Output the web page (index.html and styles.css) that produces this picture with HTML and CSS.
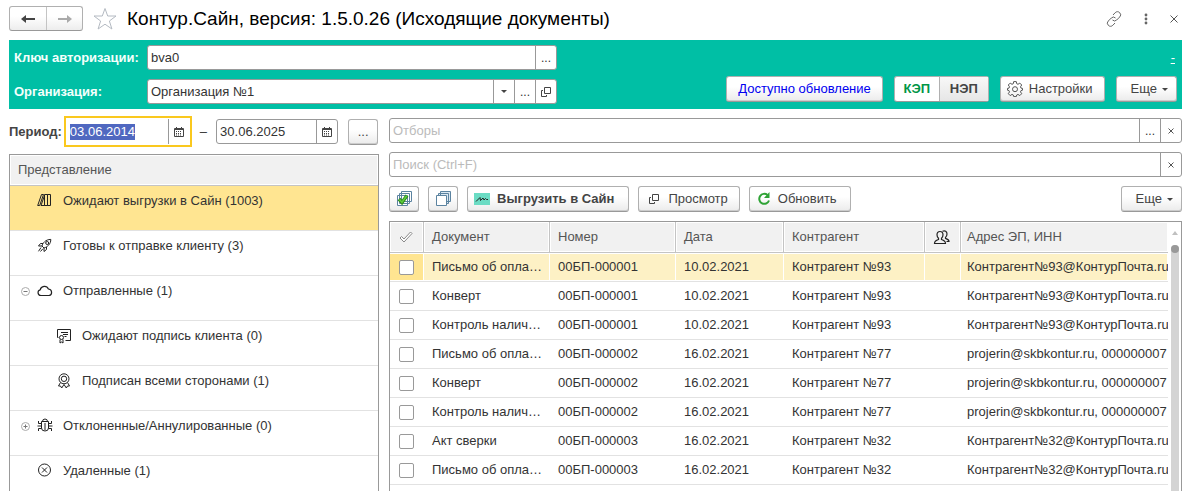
FILE: index.html
```html
<!DOCTYPE html>
<html lang="ru">
<head>
  <meta charset="UTF-8" />
  <meta name="viewport" content="width=device-width, initial-scale=1.0" />
  <title>Контур.Сайн</title>
  <link rel="stylesheet" href="styles.css">
</head>
<body>
  <svg class="sprite" aria-hidden="true">
    <symbol id="calendar" viewBox="0 0 10 10">
      <path d="M.5 1.5h9v8h-9zM0 2.500h10M2.500 0v2M7.500 0v2" fill="none" stroke="#444" />
      <path d="M2 4.500h6M2 6.500h6M2 8h6" stroke="#444" stroke-dasharray="1 1" />
    </symbol>
    <symbol id="open" viewBox="0 0 10 10">
      <path d="M3.500.500h6v6h-6zM2 3.500H.500v6h5V8" fill="none" stroke="#444" />
    </symbol>
  </svg>

  <header class="titlebar">
    <div class="nav">
      <button type="button" aria-label="Назад">
        <svg width="14" height="10" viewBox="0 0 14 10"><path d="M0 5l5-4v3h9v2H5v3z" fill="#444" /></svg>
      </button>
      <button type="button" aria-label="Вперед">
        <svg width="14" height="10" viewBox="0 0 14 10"><path d="M14 5L9 1v3H0v2h9v3z" fill="#aaa" /></svg>
      </button>
    </div>
    <button type="button" class="plain" aria-label="В избранное">
      <svg width="24" height="24" viewBox="0 0 24 24"><path d="M12 1.500l2.700 7.500h8.300l-6.600 5 2.500 8L12 17.200 5.100 22l2.500-8L1 9h8.300z" fill="none" stroke="#b4bac2" /></svg>
    </button>
    <h1>Контур.Сайн, версия: 1.5.0.26 (Исходящие документы)</h1>
    <div class="window-tools">
      <button type="button" class="plain" aria-label="Получить ссылку">
        <svg width="16" height="16" viewBox="0 0 16 16" fill="none" stroke="#666"><path d="M7 4l2.200-2.300a3 3 0 0 1 4.500 0 3 3 0 0 1 0 4.300l-3 3a3 3 0 0 1-4.200 0M9 12l-2.200 2.300a3 3 0 0 1-4.500 0 3 3 0 0 1 0-4.300l3-3a3 3 0 0 1 4.200 0" /></svg>
      </button>
      <button type="button" class="plain" aria-label="Меню">
        <svg width="4" height="12" viewBox="0 0 4 12" fill="#666"><circle cx="2" cy="2" r="1.400" /><circle cx="2" cy="6" r="1.400" /><circle cx="2" cy="10" r="1.400" /></svg>
      </button>
      <button type="button" class="plain" aria-label="Закрыть">
        <svg width="8" height="8" viewBox="0 0 8 8"><path d="M.5.500l7 7M7.500.500l-7 7" stroke="#555" /></svg>
      </button>
    </div>
  </header>

  <section class="auth">
    <div class="auth-fields">
      <label for="authKey">Ключ авторизации:</label>
      <div class="field">
        <input type="text" id="authKey" value="bva0" />
        <button type="button">...</button>
      </div>
      <label for="organization">Организация:</label>
      <div class="field">
        <input type="text" id="organization" value="Организация №1" />
        <button type="button" aria-label="Список"><span class="caret"></span></button>
        <button type="button">...</button>
        <button type="button" aria-label="Открыть"><svg width="10" height="10"><use href="#open" /></svg></button>
      </div>
    </div>
    <div class="auth-actions">
      <a href="#" class="collapse">-</a>
      <div class="buttons">
        <button type="button" class="btn update">Доступно обновление</button>
        <div class="switch">
          <button type="button" class="on">КЭП</button>
          <button type="button">НЭП</button>
        </div>
        <button type="button" class="btn settings">
          <svg width="16" height="16" viewBox="0 0 16 16" fill="none" stroke="#555"><path d="M6.700.600h2.600l.4 2.100 1.300.600 1.800-1.200 1.900 1.900-1.200 1.800.5 1.300 1.500.300v1.800l-1.500.400-.5 1.300 1.200 1.800-1.900 1.900-1.800-1.200-1.300.600-.4 1.600H6.700l-.4-1.600-1.300-.600-1.800 1.200-1.900-1.900 1.200-1.800-.5-1.300-1.500-.4V7.400L2 7.100l.5-1.300L1.300 4l1.900-1.900L5 3.300l1.300-.6z" /><circle cx="8" cy="8.200" r="2.500" /></svg>
          Настройки
        </button>
        <button type="button" class="btn more">Еще <span class="caret"></span></button>
      </div>
    </div>
  </section>

  <main class="content">
    <aside class="side">
      <div class="period">
        <label for="dateFrom">Период:</label>
        <div class="field date active">
          <input type="text" id="dateFrom" value="03.06.2014" />
          <button type="button" aria-label="Календарь"><svg width="10" height="10"><use href="#calendar" /></svg></button>
        </div>
        <span class="dash">–</span>
        <div class="field date">
          <input type="text" id="dateTo" aria-label="Конец периода" value="30.06.2025" />
          <button type="button" aria-label="Календарь"><svg width="10" height="10"><use href="#calendar" /></svg></button>
        </div>
        <button type="button" class="btn icon-btn period-more">...</button>
      </div>

      <div class="tree">
        <div class="tree-head">Представление</div>
        <ul>
          <li class="selected">
            <span class="toggle"></span>
            <svg width="16" height="16" viewBox="0 0 16 16" fill="none" stroke="#222"><path d="M.7 12.500L4.500 1.500h2L2.700 12.500zM4 12.500L7.500 2.500v10zM7.500 1.500h3v11h-3zM10.500 1.500h3v11h-3z" /></svg>
            Ожидают выгрузки в Сайн (1003)
          </li>
          <li>
            <span class="toggle"></span>
            <svg width="16" height="16" viewBox="0 0 16 16" fill="none" stroke="#222"><path d="M5 8c.7-3 3.500-6.500 8.800-6.600C13.900 6 10.500 8.800 7 10zM6 5.500H3.500L1.500 8 5 8M9.500 9v2.500L7 13.500V10M4 9.500l-2.500 3.800M5.800 10.800L3.500 13.500" /><circle cx="10.200" cy="5" r="1.500" /></svg>
            Готовы к отправке клиенту (3)
          </li>
          <li>
            <button type="button" class="toggle" aria-label="Свернуть"><svg width="9" height="9" viewBox="0 0 9 9" fill="none" stroke="#aaa"><circle cx="4.500" cy="4.500" r="4" /><path d="M2.500 4.500h4" stroke="#777" /></svg></button>
            <svg width="16" height="16" viewBox="0 0 16 16" fill="none" stroke="#222" stroke-width="1.200"><path d="M3.800 12.500a2.900 2.900 0 0 1-.6-5.700 4.300 4.300 0 0 1 8.200-.8 3.300 3.300 0 0 1 .7 6.500z" /></svg>
            Отправленные (1)
          </li>
          <li class="child">
            <svg width="16" height="16" viewBox="0 0 16 16" fill="none" stroke="#222"><path d="M2.500 9.500h-1v-8h13v11H9.500M5 4.500h7M7 6.500h5M8.500 8.500h2M4 11.500V15l1.500-1L7 15v-3.500" /><circle cx="5.500" cy="9.500" r="2" /></svg>
            Ожидают подпись клиента (0)
          </li>
          <li class="child">
            <svg width="16" height="16" viewBox="0 0 16 16" fill="none" stroke="#222"><circle cx="8" cy="5.800" r="5" /><circle cx="8" cy="5.800" r="2.700" /><path d="M4.500 9.500L2.500 13h2l1.200 2L8 11.500l2.300 3.500 1.200-2h2l-2-3.500" /></svg>
            Подписан всеми сторонами (1)
          </li>
          <li>
            <button type="button" class="toggle" aria-label="Развернуть"><svg width="9" height="9" viewBox="0 0 9 9" fill="none" stroke="#aaa"><circle cx="4.500" cy="4.500" r="4" /><path d="M2.500 4.500h4M4.500 2.500v4" stroke="#777" /></svg></button>
            <svg width="16" height="16" viewBox="0 0 16 16" fill="none" stroke="#222"><path d="M5.500 3.500a2.500 2.500 0 0 1 5 0M4.500 3.500h7V10a3.500 3 0 0 1-7 0zM8 5v7M4.500 5.500h-3V3M4.500 8H.5M4.500 10.500h-3V13M11.500 5.500h3V3M11.500 8h4M11.500 10.500h3V13" /></svg>
            Отклоненные/Аннулированные (0)
          </li>
          <li>
            <span class="toggle"></span>
            <svg width="16" height="16" viewBox="0 0 16 16" fill="none" stroke="#222"><circle cx="7.500" cy="7" r="6" /><path d="M5 4.500l5 5M10 4.500l-5 5" /></svg>
            Удаленные (1)
          </li>
        </ul>
      </div>
    </aside>

    <section class="docs">
      <div class="field">
        <input type="text" aria-label="Отборы" placeholder="Отборы" />
        <button type="button">...</button>
        <button type="button" aria-label="Очистить"><svg width="6" height="6" viewBox="0 0 6 6"><path d="M.5.500l5 5M5.500.500l-5 5" stroke="#555" /></svg></button>
      </div>
      <div class="field">
        <input type="text" aria-label="Поиск" placeholder="Поиск (Ctrl+F)" />
        <button type="button" aria-label="Очистить"><svg width="6" height="6" viewBox="0 0 6 6"><path d="M.5.500l5 5M5.500.500l-5 5" stroke="#555" /></svg></button>
      </div>
      <div class="toolbar">
        <button type="button" class="btn icon-btn" aria-label="Отметить все">
          <svg width="16" height="16" viewBox="0 0 16 16" fill="#fff" stroke="#5b83a0"><path d="M5.500.500h10v10h-10zM3.500 2.500h10v10h-10zM1.500 4.500h10v10h-10z" /><path d="M3 8l3 3.500 5-7" fill="none" stroke="#2e8b1e" stroke-width="3.500" /><path d="M3.500 8.500l2.500 2.800 4.700-6.500" fill="none" stroke="#5fce3d" stroke-width="1.500" /></svg>
        </button>
        <button type="button" class="btn icon-btn" aria-label="Снять отметки">
          <svg width="16" height="16" viewBox="0 0 16 16" fill="#dbe8f2" stroke="#5b83a0"><path d="M5.500.500h10v10h-10zM3.500 2.500h10v10h-10z" /><path d="M1.500 4.500h10v10h-10z" fill="#fff" /></svg>
        </button>
        <button type="button" class="btn upload">
          <svg width="16" height="12" viewBox="0 0 16 12"><path d="M0 0h16v12H0z" fill="#6bdcc4" /><path d="M2 8.500l4-4 .5 3L9 5l1 2 1.500-1.500 1 1H14" fill="none" stroke="#222" /></svg>
          Выгрузить в Сайн
        </button>
        <button type="button" class="btn preview">
          <svg width="10" height="10"><use href="#open" /></svg>
          Просмотр
        </button>
        <button type="button" class="btn refresh">
          <svg width="14" height="14" viewBox="0 0 14 14"><path d="M10.500 3A5 5 0 1 0 12 8.500" fill="none" stroke="#2fa336" stroke-width="2" /><path d="M12.500 0v6H7z" fill="#2fa336" /></svg>
          Обновить
        </button>
        <button type="button" class="btn more">Еще <span class="caret"></span></button>
      </div>

      <div class="grid">
        <div class="grid-body">
          <table>
            <colgroup>
              <col class="c-check"><col class="c-doc"><col class="c-num"><col class="c-date"><col class="c-agent"><col class="c-group"><col>
            </colgroup>
            <thead>
              <tr>
                <th class="mark"><svg width="14" height="12" viewBox="0 0 14 12"><path d="M1 7l1.500-1.500L5 8 11.500 1 13 2.500 5 11z" fill="#fff" stroke="#888" /></svg></th>
                <th>Документ</th>
                <th>Номер</th>
                <th>Дата</th>
                <th>Контрагент</th>
                <th class="mark"><svg width="17" height="15" viewBox="0 0 17 15" fill="none" stroke="#222" stroke-width="1.200"><path d="M7 1.500c2 0 3 1.300 3 3.200 0 1.600-.6 2.800-1.500 3.600v1.200c2.500.8 4 1.500 4 4h-11c0-2.500 1.500-3.200 4-4V8.300C4.600 7.500 4 6.300 4 4.700c0-1.900 1-3.200 3-3.200zM9.500 1.200c2.500-1 4.500.300 4.500 2.800 0 1.500-.6 2.600-1.500 3.400v1c2 .7 3.500 1.300 3.500 3.100h-2.500" /></svg></th>
                <th class="address">Адрес ЭП, ИНН</th>
              </tr>
            </thead>
            <tbody>
              <tr class="current">
                <td class="mark"><input type="checkbox" aria-label="Выбрать" /></td>
                <td>Письмо об опла…</td><td>00БП-000001</td><td>10.02.2021</td><td>Контрагент №93</td><td></td><td class="address">Контрагент№93@КонтурПочта.ru</td>
              </tr>
              <tr>
                <td class="mark"><input type="checkbox" aria-label="Выбрать" /></td>
                <td>Конверт</td><td>00БП-000001</td><td>10.02.2021</td><td>Контрагент №93</td><td></td><td class="address">Контрагент№93@КонтурПочта.ru</td>
              </tr>
              <tr>
                <td class="mark"><input type="checkbox" aria-label="Выбрать" /></td>
                <td>Контроль налич…</td><td>00БП-000001</td><td>10.02.2021</td><td>Контрагент №93</td><td></td><td class="address">Контрагент№93@КонтурПочта.ru</td>
              </tr>
              <tr>
                <td class="mark"><input type="checkbox" aria-label="Выбрать" /></td>
                <td>Письмо об опла…</td><td>00БП-000002</td><td>16.02.2021</td><td>Контрагент №77</td><td></td><td class="address">projerin@skbkontur.ru, 000000007</td>
              </tr>
              <tr>
                <td class="mark"><input type="checkbox" aria-label="Выбрать" /></td>
                <td>Конверт</td><td>00БП-000002</td><td>16.02.2021</td><td>Контрагент №77</td><td></td><td class="address">projerin@skbkontur.ru, 000000007</td>
              </tr>
              <tr>
                <td class="mark"><input type="checkbox" aria-label="Выбрать" /></td>
                <td>Контроль налич…</td><td>00БП-000002</td><td>16.02.2021</td><td>Контрагент №77</td><td></td><td class="address">projerin@skbkontur.ru, 000000007</td>
              </tr>
              <tr>
                <td class="mark"><input type="checkbox" aria-label="Выбрать" /></td>
                <td>Акт сверки</td><td>00БП-000003</td><td>16.02.2021</td><td>Контрагент №32</td><td></td><td class="address">Контрагент№32@КонтурПочта.ru</td>
              </tr>
              <tr>
                <td class="mark"><input type="checkbox" aria-label="Выбрать" /></td>
                <td>Письмо об опла…</td><td>00БП-000003</td><td>16.02.2021</td><td>Контрагент №32</td><td></td><td class="address">Контрагент№32@КонтурПочта.ru</td>
              </tr>
            </tbody>
          </table>
        </div>
        <div class="scroll">
          <span class="scroll-up"></span>
          <div class="scroll-track"><span class="scroll-thumb"></span></div>
        </div>
      </div>
    </section>
  </main>

  <script>
    // курсор сразу в начале периода
    document.getElementById('dateFrom').focus();
    document.getElementById('dateFrom').select();
  </script>
</body>
</html>
```

FILE: styles.css
```css
* {
  box-sizing: border-box;
  margin: 0;
  padding: 0;
}

body {
  display: flex;
  flex-direction: column;
  height: 100vh;
  padding: 0 2px 0 9px;
  overflow: hidden;
  background: #fff;
  color: #333;
  font: 13px/16px "Liberation Sans", Arial, sans-serif;
}

button,
input {
  font: inherit;
  color: inherit;
}

button {
  display: flex;
  align-items: center;
  justify-content: center;
  border: none;
  background: none;
  white-space: nowrap;
}

svg {
  flex: none;
}

.sprite {
  position: absolute;
  width: 0;
  height: 0;
}

/* заголовок окна */
.titlebar {
  display: flex;
  align-items: center;
  flex: none;
  gap: 10px;
  height: 40px;
  padding-bottom: 3px;
}

.nav {
  display: flex;
  height: 25px;
  border: 1px solid #b0b0b0;
  border-bottom-color: #999;
  border-radius: 3px;
  background: linear-gradient(#fff 40%, #ededed);
}

.nav button {
  width: 36px;
}

.nav button + button {
  border-left: 1px solid #c4c4c4;
}

h1 {
  font-size: 19px;
  font-weight: normal;
  line-height: 24px;
  color: #000;
  white-space: nowrap;
}

.window-tools {
  display: flex;
  align-items: center;
  gap: 22px;
  margin-left: auto;
  padding-right: 4px;
}

/* поля ввода */
.field {
  display: flex;
  flex: none;
  height: 25px;
  border: 1px solid #999;
  border-radius: 3px;
  background: #fff;
}

.field input {
  flex: 1;
  min-width: 0;
  padding: 0 3px;
  border: none;
  outline: none;
  background: none;
}

.field input::placeholder {
  color: #bbb;
}

.field input::selection {
  background: #5068c0;
  color: #fff;
}

.field button {
  width: 21px;
  border-left: 1px solid #999;
  font-size: 12px;
}

.caret {
  border: 3px solid transparent;
  border-top-color: #444;
  border-bottom: none;
}

/* кнопки */
.btn {
  gap: 9px;
  height: 26px;
  padding: 0 13px 0 10px;
  border: 1px solid #b0b0b0;
  border-bottom-color: #999;
  border-radius: 3px;
  background: linear-gradient(#fff 40%, #ebebeb);
  box-shadow: inset 0 -1px 0 #ccc;
  color: #444;
}

.icon-btn {
  width: 30px;
  padding: 0;
}

.more {
  gap: 5px;
  padding: 0 8px 0 14px;
}

/* зелёная панель */
.auth {
  display: flex;
  flex: none;
  justify-content: space-between;
  padding: 5px;
  background: #00bfa5;
}

.auth-fields {
  display: grid;
  grid-template-columns: 133px minmax(200px, 410px);
  row-gap: 9px;
  flex: 0 1 543px;
  align-items: center;
}

.auth label {
  font-weight: bold;
  color: #f4fffc;
}

.auth-actions {
  display: flex;
  flex-direction: column;
  align-items: flex-end;
  justify-content: space-between;
  padding: 5px 0 2px;
}

.collapse {
  padding-right: 2px;
  color: #fff;
}

.buttons {
  display: flex;
  gap: 11px;
}

.update {
  padding: 0 11px;
  color: #0000f0;
}

.settings {
  padding: 0 11px 0 6px;
  gap: 6px;
}

.switch {
  display: flex;
  border: 1px solid #b0b0b0;
  border-bottom-color: #999;
  border-radius: 3px;
  background: #fff;
}

.switch button {
  width: 49px;
  background: linear-gradient(#f8f8f8, #e6e6e6);
  border-left: 1px solid #b0b0b0;
  font-weight: bold;
  color: #444;
}

.switch .on {
  width: 44px;
  border-left: none;
  background: none;
  color: #009646;
}

/* левая часть */
.content {
  display: grid;
  grid-template-columns: 370px 1fr;
  gap: 10px;
  flex: 1;
  min-height: 0;
}

.side,
.docs {
  display: flex;
  flex-direction: column;
  min-width: 0;
  min-height: 0;
}

.period {
  display: flex;
  align-items: center;
  height: 45px;
}

.period label {
  margin-right: 2px;
  font-weight: bold;
  color: #444;
}

.dash {
  padding: 0 9px 0 8px;
}

.date {
  width: 122px;
}

.date.active {
  width: 128px;
  height: 31px;
  padding: 1px;
  border: 2px solid #fac81e;
  border-radius: 0;
}

.period-more {
  margin-left: 10px;
}

.tree {
  flex: 1;
  min-height: 0;
  overflow: hidden;
  border: 1px solid #999;
  border-bottom: none;
}

.tree-head {
  height: 31px;
  padding: 7px 8px;
  border-bottom: 1px solid #c4c4c4;
  background: #f1f1f1;
  box-shadow: inset 0 0 0 1px #fff;
  color: #555;
}

.tree ul {
  list-style: none;
}

.tree li {
  display: flex;
  align-items: flex-start;
  gap: 10px;
  height: 45px;
  padding: 7px 10px;
  border-bottom: 1px solid #e2e2e2;
}

.tree .selected {
  background: #ffe591;
}

.tree .child {
  padding-left: 46px;
}

.toggle {
  width: 11px;
  height: 16px;
  margin-right: -4px;
}

/* правая часть */
.docs {
  gap: 9px;
  padding-top: 9px;
}

.toolbar {
  display: flex;
  flex: none;
  gap: 9px;
}

.toolbar .more {
  margin-left: auto;
}

.upload {
  gap: 7px;
  padding: 0 14px 0 6px;
  font-weight: bold;
}

.preview {
  padding-right: 11px;
}

.refresh {
  gap: 7px;
  padding-left: 7px;
}

.grid {
  display: flex;
  flex: 1;
  min-height: 0;
  overflow: hidden;
  border: 1px solid #999;
  border-bottom: none;
}

.grid-body {
  flex: 1;
  min-width: 0;
}

table {
  width: 100%;
  table-layout: fixed;
  border-collapse: separate;
  border-spacing: 0;
}

.c-check { width: 34px; }
.c-doc { width: 126px; }
.c-num { width: 126px; }
.c-date { width: 108px; }
.c-agent { width: 141px; }
.c-group { width: 36px; }

th,
td {
  height: 29px;
  padding: 0 4px 0 8px;
  border-bottom: 1px solid #e2e2e2;
  overflow: hidden;
  text-align: left;
  text-overflow: ellipsis;
  white-space: nowrap;
}

th {
  height: 31px;
  border-right: 1px solid #c4c4c4;
  border-bottom-color: #c4c4c4;
  background: #f1f1f1;
  box-shadow: inset 0 0 0 1px #fff;
  font-weight: normal;
  color: #555;
}

th:last-child {
  border-right: none;
}

.address {
  padding: 0 0 0 6px;
  text-overflow: clip;
}

.mark {
  padding: 0 2px 0 0;
  text-align: center;
}

.mark svg,
.mark input {
  display: block;
  margin: 0 auto;
}

.mark input {
  width: 15px;
  height: 15px;
  appearance: none;
  border: 1px solid #999;
  border-radius: 2px;
  background: #fff;
}

.current td {
  background: #fdf1c5;
  box-shadow: inset -1px 0 0 #fff, inset 0 1px 0 #fff, inset 0 -1px 0 #fff;
}

.current .mark {
  background: #ffe591;
}

.scroll {
  display: flex;
  flex-direction: column;
  align-items: center;
  flex: none;
  width: 13px;
  padding-top: 9px;
}

.scroll-up {
  border: 3px solid transparent;
  border-bottom: 4px solid #c0c0c0;
  border-top: none;
}

.scroll-track {
  flex: 1;
  width: 8px;
  margin-top: 10px;
  border-radius: 4px 4px 0 0;
  background: #d4d4d4;
}

.scroll-thumb {
  display: block;
  height: 8px;
  border-radius: 4px;
  background: #999;
}
```
